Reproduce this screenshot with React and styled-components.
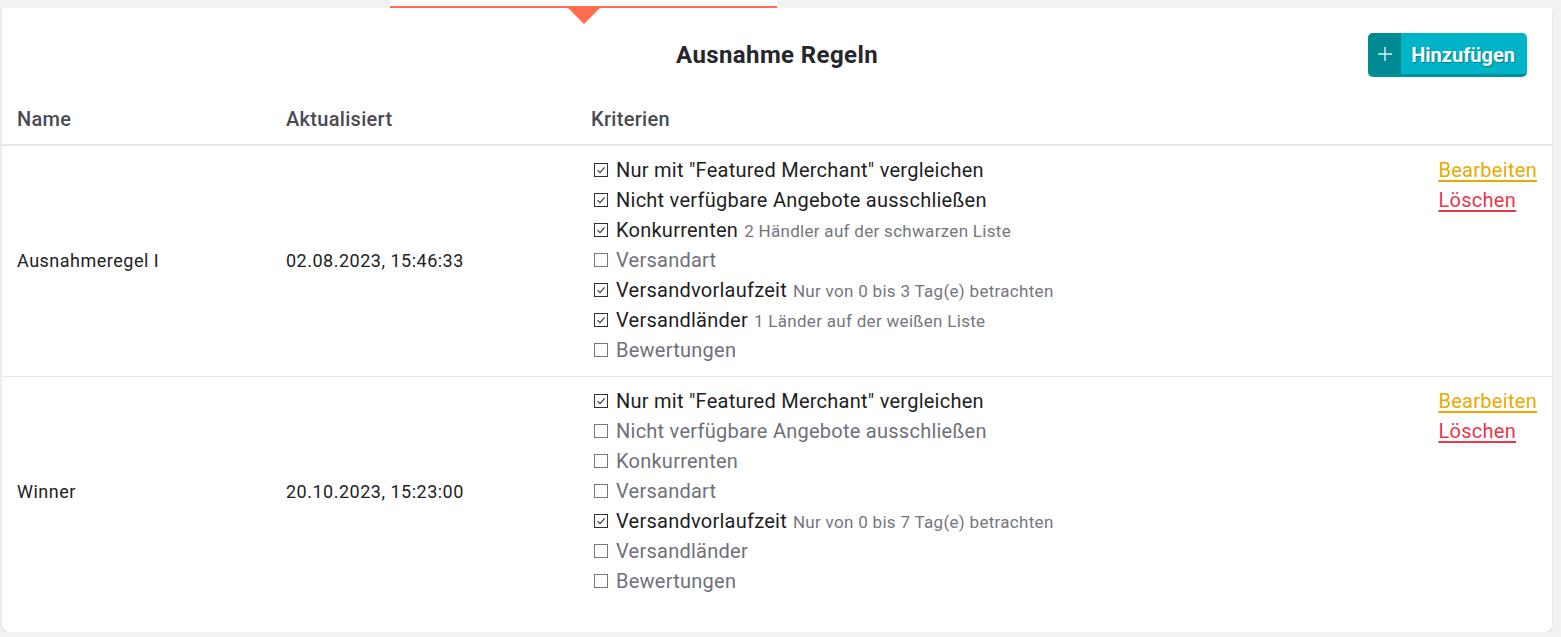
import React from 'react';
import styled, { createGlobalStyle } from 'styled-components';

const GlobalStyle = createGlobalStyle`
  body {
    margin: 0;
    background: #f2f2f2;
    font-family: Roboto, "Noto Sans", sans-serif;
  }
`;

const rules = [
  {
    name: 'Ausnahmeregel I',
    updated: '02.08.2023, 15:46:33',
    criteria: [
      { label: 'Nur mit "Featured Merchant" vergleichen', on: true },
      { label: 'Nicht verfügbare Angebote ausschließen', on: true },
      { label: 'Konkurrenten', on: true, detail: '2 Händler auf der schwarzen Liste' },
      { label: 'Versandart', on: false },
      { label: 'Versandvorlaufzeit', on: true, detail: 'Nur von 0 bis 3 Tag(e) betrachten' },
      { label: 'Versandländer', on: true, detail: '1 Länder auf der weißen Liste' },
      { label: 'Bewertungen', on: false },
    ],
  },
  {
    name: 'Winner',
    updated: '20.10.2023, 15:23:00',
    criteria: [
      { label: 'Nur mit "Featured Merchant" vergleichen', on: true },
      { label: 'Nicht verfügbare Angebote ausschließen', on: false },
      { label: 'Konkurrenten', on: false },
      { label: 'Versandart', on: false },
      { label: 'Versandvorlaufzeit', on: true, detail: 'Nur von 0 bis 7 Tag(e) betrachten' },
      { label: 'Versandländer', on: false },
      { label: 'Bewertungen', on: false },
    ],
  },
];

const Page = styled.div`
  padding: 0 9px 0 2px;
`;

const TabStrip = styled.div`
  height: 8px;
  display: flex;
`;

const ActiveTab = styled.div`
  position: relative;
  margin-left: 388px;
  width: 387px;
  height: 6px;
  background: #fff;
  border-bottom: 2px solid #ff6e4f;

  &::after {
    content: '';
    position: absolute;
    left: 178px;
    top: 8px;
    border-left: 16px solid transparent;
    border-right: 16px solid transparent;
    border-top: 16px solid #ff6e4f;
  }
`;

const Card = styled.section`
  background: #fff;
  border-radius: 0 0 8px 8px;
  box-shadow: 0 2px 3px rgba(0, 0, 0, 0.08);
  padding-bottom: 25px;
`;

const TitleBar = styled.div`
  display: grid;
  grid-template-columns: 1fr auto 1fr;
  align-items: center;
  padding: 25px 25px 0;
`;

const Title = styled.h2`
  grid-column: 2;
  margin: 0;
  font-size: 24px;
  font-weight: 700;
  color: #26262b;
  letter-spacing: 0.4px;
`;

const AddButton = styled.button`
  justify-self: end;
  display: flex;
  align-items: stretch;
  height: 44px;
  padding: 0;
  border: none;
  border-bottom: 3px solid #00919e;
  border-radius: 5px;
  background: #00b4c8;
  overflow: hidden;
  cursor: pointer;
  font-family: inherit;
`;

const AddIcon = styled.span`
  display: flex;
  align-items: center;
  justify-content: center;
  width: 33px;
  background: #008a94;
`;

const AddLabel = styled.span`
  display: flex;
  align-items: center;
  padding: 2px 12px 0 10px;
  color: #fff;
  font-size: 20px;
  font-weight: 700;
  text-shadow: 1px 1px 1px rgba(0, 0, 0, 0.3);
`;

const Grid = styled.div`
  display: grid;
  grid-template-columns: 269px 305px 1fr auto;
  padding: 0 15px;
  border-bottom: ${(p) => (p.$head ? '2px solid #e6e6e6' : '1px solid #e8e8e8')};
  ${(p) => p.$last && 'border-bottom: none;'}
`;

const HeadCell = styled.div`
  padding: 30px 0 13px;
  font-size: 20px;
  line-height: 24px;
  font-weight: 500;
  letter-spacing: 0.3px;
  color: #4a4a54;
`;

const Row = styled(Grid)`
  padding-top: 9px;
  padding-bottom: 11px;
`;

const Cell = styled.div`
  align-self: center;
  font-size: 18px;
  letter-spacing: 0.5px;
  color: #222;
`;

const CriteriaList = styled.ul`
  margin: 0;
  padding: 0 0 0 3px;
  list-style: none;
`;

const Criterion = styled.li`
  display: flex;
  align-items: center;
  gap: 8px;
  height: 30px;
  font-size: 20px;
  letter-spacing: 0.25px;
  color: ${(p) => (p.$on ? '#1e1e22' : '#707078')};
`;

const Detail = styled.span`
  margin-left: 6px;
  font-size: 17px;
  letter-spacing: 0.3px;
  color: #76767d;
`;

const Actions = styled.div`
  display: flex;
  flex-direction: column;
`;

const ActionLink = styled.a`
  height: 30px;
  line-height: 30px;
  font-size: 20px;
  letter-spacing: 0.3px;
  color: ${(p) => (p.$danger ? '#e8374a' : '#e9aa00')};
  text-decoration: underline;
  text-underline-offset: 3px;
  cursor: pointer;
`;

const Box = ({ on }) => (
  <svg width="14" height="14" viewBox="0 0 14 14" style={{ flexShrink: 0 }}>
    <rect
      x="0.5"
      y="0.5"
      width="13"
      height="13"
      fill="none"
      stroke={on ? '#333' : '#777'}
      strokeWidth="1"
    />
    {on && <path d="M3.5 7.2 L6 9.6 L10.6 4.4" fill="none" stroke="#333" strokeWidth="1.1" />}
  </svg>
);

const App = () => (
  <Page>
    <GlobalStyle />
    <TabStrip>
      <ActiveTab />
    </TabStrip>
    <Card>
      <TitleBar>
        <Title>Ausnahme Regeln</Title>
        <AddButton type="button">
          <AddIcon>
            <svg width="16" height="16" viewBox="0 0 16 16">
              <path d="M8 1 V15 M1 8 H15" stroke="#d8f3f5" strokeWidth="1.4" />
            </svg>
          </AddIcon>
          <AddLabel>Hinzufügen</AddLabel>
        </AddButton>
      </TitleBar>
      <Grid $head>
        <HeadCell>Name</HeadCell>
        <HeadCell>Aktualisiert</HeadCell>
        <HeadCell>Kriterien</HeadCell>
        <HeadCell />
      </Grid>
      {rules.map((rule, i) => (
        <Row key={rule.name} $last={i === rules.length - 1}>
          <Cell>{rule.name}</Cell>
          <Cell>{rule.updated}</Cell>
          <CriteriaList>
            {rule.criteria.map((c) => (
              <Criterion key={c.label} $on={c.on}>
                <Box on={c.on} />
                <span>
                  {c.label}
                  {c.detail && <Detail>{c.detail}</Detail>}
                </span>
              </Criterion>
            ))}
          </CriteriaList>
          <Actions>
            <ActionLink>Bearbeiten</ActionLink>
            <ActionLink $danger>Löschen</ActionLink>
          </Actions>
        </Row>
      ))}
    </Card>
  </Page>
);

export default App;
